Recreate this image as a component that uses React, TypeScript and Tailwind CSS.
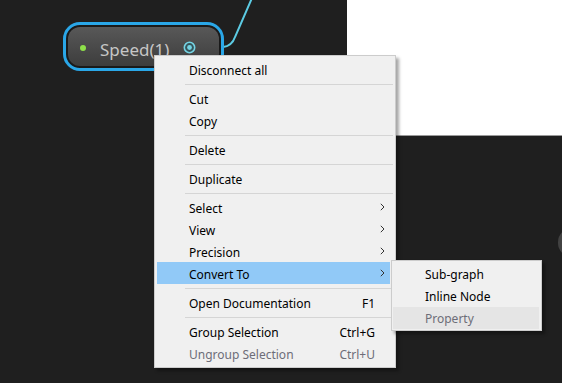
import clsx from "clsx"

const sans = { fontFamily: '"Noto Sans", "Liberation Sans", sans-serif' }

type Entry =
    | { kind: "sep" }
    | { kind: "item"; label: string; shortcut?: string; sub?: boolean; disabled?: boolean; active?: boolean }

const menu: Entry[] = [
    { kind: "item", label: "Disconnect all" },
    { kind: "sep" },
    { kind: "item", label: "Cut" },
    { kind: "item", label: "Copy" },
    { kind: "sep" },
    { kind: "item", label: "Delete" },
    { kind: "sep" },
    { kind: "item", label: "Duplicate" },
    { kind: "sep" },
    { kind: "item", label: "Select", sub: true },
    { kind: "item", label: "View", sub: true },
    { kind: "item", label: "Precision", sub: true },
    { kind: "item", label: "Convert To", sub: true, active: true },
    { kind: "sep" },
    { kind: "item", label: "Open Documentation", shortcut: "F1" },
    { kind: "sep" },
    { kind: "item", label: "Group Selection", shortcut: "Ctrl+G" },
    { kind: "item", label: "Ungroup Selection", shortcut: "Ctrl+U", disabled: true },
]

function Chevron() {
    return (
        <svg width="5" height="8" viewBox="0 0 5 8" className="text-[#333]">
            <polyline points="0.8,0.8 4,4 0.8,7.2" fill="none" stroke="currentColor" strokeWidth="1" />
        </svg>
    )
}

function MenuRow({ label, shortcut, sub, disabled, active }: Omit<Extract<Entry, { kind: "item" }>, "kind">) {
    return (
        <div
            className={clsx(
                "ml-[2px] mr-[5px] flex h-[22px] items-center pl-[32px] pt-[3px] text-[12px] leading-none",
                active && "bg-[#91c9f7]",
                disabled ? "text-[#6d6d78]" : "text-black"
            )}
        >
            <span className="flex-1">{label}</span>
            {shortcut && <span>{shortcut}</span>}
            <span className="-mt-[3px] flex w-[15px] items-center pl-[5px]">{sub && <Chevron />}</span>
        </div>
    )
}

function ContextMenu() {
    return (
        <div className="absolute left-[154px] top-[55px] w-[242px] border border-[#cccccc] bg-[#f0f0f0] pb-[3px] pt-[2px] shadow-[3px_3px_3px_rgba(0,0,0,0.35)]">
            {menu.map((e, i) =>
                e.kind === "sep" ? (
                    <div key={i} className="ml-[30px] mr-[2px] h-[7px] pt-[4px]">
                        <div className="h-px bg-[#d5d5d5]" />
                    </div>
                ) : (
                    <MenuRow key={i} {...e} />
                )
            )}
        </div>
    )
}

function SubMenu() {
    const rows = ["Sub-graph", "Inline Node", "Property"]
    return (
        <div className="absolute left-[391px] top-[260px] w-[151px] border border-[#cccccc] bg-[#f0f0f0] pb-[1px] pt-[2px] shadow-[3px_3px_3px_rgba(0,0,0,0.35)]">
            {rows.map((r) => (
                <div
                    key={r}
                    className={clsx(
                        "ml-[1px] mr-[2px] flex h-[22px] items-center pl-[32px] pt-[1px] text-[12px] leading-none",
                        r === "Property" ? "bg-[#e5e5e5] text-[#6d6d78]" : "text-black"
                    )}
                >
                    {r}
                </div>
            ))}
        </div>
    )
}

function SpeedNode() {
    return (
        <div className="absolute left-[63px] top-[22px] h-[49px] w-[161px] rounded-[17px] border-[3px] border-[#2aa7e8] bg-[#1a1a1a] p-[2px]">
            <div className="flex h-full items-center rounded-[12px] bg-gradient-to-b from-[#585858] to-[#3d3d3d] pl-[12px]">
                <span className="mt-[3px] h-[6px] w-[6px] rounded-full bg-[#8ee04a]" />
                <span className="ml-[14px] mt-[5px] text-[17px] leading-none text-[#c6c6c6]">Speed(1)</span>
                <svg width="13" height="13" viewBox="0 0 13 13" className="ml-[14px] mt-[1px]">
                    <circle cx="6.5" cy="6.5" r="5.2" fill="#35545a" stroke="#74d3e3" strokeWidth="1.6" />
                    <circle cx="6.5" cy="6.5" r="2.4" fill="#74d3e3" />
                </svg>
            </div>
        </div>
    )
}

export default function App() {
    return (
        <div className="relative h-[383px] w-[562px] overflow-hidden bg-[#1f1f1f]" style={sans}>
            <div className="absolute left-[347px] top-0 h-[136px] w-[215px] border-b border-[#9a9a9a] bg-white" />
            <div className="absolute left-[558px] top-[228px] h-[29px] w-[60px] rounded-[14px] bg-[#424242]" />
            <svg className="pointer-events-none absolute inset-0" width="562" height="383">
                <path d="M223 47 Q232 46 235 37 L252 -2" fill="none" stroke="#5ccbe3" strokeWidth="2" />
            </svg>
            <SpeedNode />
            <ContextMenu />
            <SubMenu />
        </div>
    )
}
